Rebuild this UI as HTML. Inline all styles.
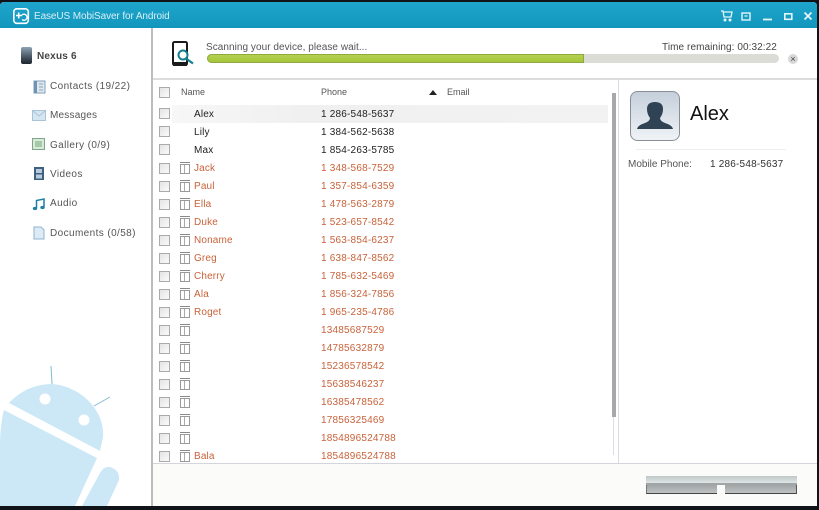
<!DOCTYPE html>
<html><head><meta charset="utf-8"><style>
html,body{margin:0;padding:0;width:819px;height:510px;overflow:hidden;background:#101418}
*{box-sizing:border-box}
body{font-family:"Liberation Sans",sans-serif;font-size:10px;color:#333;position:relative}
.a{position:absolute;white-space:nowrap}
.win{position:absolute;left:0;top:2px;width:817px;height:504px;background:#fff;border-radius:4px 4px 0 3px;overflow:hidden}
.cb{position:absolute;left:159px;width:11px;height:11px;border:1px solid #aaa;background:linear-gradient(135deg,#e4e4e4,#fafafa)}
.tr{position:absolute;left:180px;width:10px;height:10px;border:1px solid #999;background:linear-gradient(90deg,#fff 0 3px,#aaa 3px 4px,#fff 4px)}
.tr:before{content:"";position:absolute;left:-1px;top:-3px;width:10px;height:1px;background:#888}
.n{position:absolute;left:194px;font-size:10px;letter-spacing:.15px;white-space:nowrap;line-height:12px}
.p{position:absolute;left:321px;font-size:10px;letter-spacing:.2px;white-space:nowrap;line-height:12px}
.r{color:#c8623a}.k{color:#222}
.s{position:absolute;left:50px;color:#555;font-size:10px;letter-spacing:.4px;line-height:12px;white-space:nowrap}
</style></head><body>
<div class="win"></div>
<!-- title bar -->
<div class="a" style="left:0;top:2px;width:817px;height:26px;background:linear-gradient(#1fa5cc,#1296bd);border-radius:4px 4px 0 0"></div>
<svg class="a" style="left:12px;top:7px" width="18" height="18" viewBox="0 0 18 18"><rect x="1.800" y="1.800" width="14.500" height="14.500" rx="3" fill="none" stroke="#fff" stroke-width="1.600"/><path d="M4 8.500H10M6.700 5.500V11.500" stroke="#fff" stroke-width="1.600" fill="none"/><path d="M10 8a3 3 0 1 1 0 4.500" stroke="#fff" stroke-width="1.400" fill="none"/></svg>
<div class="a" style="left:34px;top:11px;color:#d8f0f8;font-size:10px;letter-spacing:-.1px;line-height:12px">EaseUS MobiSaver for Android</div>
<svg class="a" style="left:718px;top:9px" width="95" height="14" viewBox="0 0 95 14" fill="none" stroke="#e4f6fb"><path d="M3 2h2l1 6h7l1-5H5" stroke-width="1.300"/><circle cx="7" cy="11" r="1" fill="#e4f6fb"/><circle cx="12" cy="11" r="1" fill="#e4f6fb"/><rect x="24" y="4" width="8" height="7" stroke-width="1.400"/><path d="M26.500 7h3" stroke-width="1.200"/><path d="M45 10.500h9" stroke-width="1.800"/><rect x="66.800" y="4.800" width="7" height="5.500" stroke-width="1.600"/><path d="M86.500 3.500l7 7M93.500 3.500l-7 7" stroke-width="1.800"/></svg>
<!-- sidebar -->
<svg class="a" style="left:0;top:360px" width="152" height="146" viewBox="0 0 152 146">
<path d="M9 43C20 31 35 24 52 24C80 26 105 50 103 77L100 91Z" fill="#cce8f7"/>
<path d="M4 50L97 98L75 146H0V80Q1 60 4 50Z" fill="#cce8f7"/>
<path d="M82 146L100 113Q104 106 110 107Q120 110 119 120L107 146Z" fill="#cce8f7"/>
<circle cx="45" cy="39" r="5.500" fill="#fff"/><circle cx="84" cy="60" r="5.500" fill="#fff"/>
<path d="M51 6L52 24M94 46L110 37" stroke="#7fbccf" stroke-width="1" fill="none"/></svg>
<div class="a" style="left:21px;top:47px;width:11px;height:17px;border-radius:2px;background:linear-gradient(#8da2b5,#3a4652 70%,#1f272f)"></div>
<div class="a" style="left:37px;top:50px;font-weight:bold;color:#444;font-size:10px;letter-spacing:.2px;line-height:13px">Nexus 6</div>
<svg class="a" style="left:33px;top:80px" width="14" height="14"><rect x="1" y="1" width="11" height="12" fill="#dfe8f0" stroke="#7f9fb8"/><rect x="1" y="1" width="3" height="12" fill="#6f94b3"/><path d="M6 4h4M6 7h4M6 10h4" stroke="#8aa" /></svg>
<div class="s" style="top:81px">Contacts (19/22)</div>
<svg class="a" style="left:32px;top:110px" width="15" height="12"><rect x=".5" y=".5" width="13" height="10" fill="#d5e6f3" stroke="#a9c4d8"/><path d="M1 1l6 5 6-5" stroke="#a9c4d8" fill="none"/></svg>
<div class="s" style="top:110px;letter-spacing:.2px">Messages</div>
<svg class="a" style="left:32px;top:138px" width="14" height="13"><rect x=".5" y=".5" width="12" height="11" fill="#d9ead9" stroke="#7fa68a"/><rect x="3" y="3" width="7" height="6" fill="#a8c9a8"/></svg>
<div class="s" style="top:140px">Gallery (0/9)</div>
<svg class="a" style="left:34px;top:167px" width="11" height="14"><rect width="10" height="13" fill="#3e5f80"/><rect x="2" y="2" width="6" height="4" fill="#b9cbdb"/><rect x="2" y="7.500" width="6" height="4" fill="#b9cbdb"/></svg>
<div class="s" style="top:169px">Videos</div>
<svg class="a" style="left:32px;top:197px" width="14" height="14"><path d="M4.500 11V3.500L12 2V10" fill="none" stroke="#1f7fa6" stroke-width="1.500"/><ellipse cx="3" cy="11.500" rx="2.200" ry="1.600" fill="#1f7fa6"/><ellipse cx="10.500" cy="10.500" rx="2.200" ry="1.600" fill="#1f7fa6"/></svg>
<div class="s" style="top:198px">Audio</div>
<svg class="a" style="left:33px;top:226px" width="13" height="15"><path d="M1 1h7l3 3v9H1Z" fill="#dcebf6" stroke="#8fb3cf"/></svg>
<div class="s" style="top:228px">Documents (0/58)</div>
<!-- vertical divider -->
<div class="a" style="left:151px;top:28px;width:2px;height:478px;background:#bdbdbd"></div>
<!-- top scan area -->
<svg class="a" style="left:170px;top:39px" width="26" height="28" viewBox="0 0 26 28"><rect x="3" y="3" width="14" height="23" rx="1.500" fill="#fff" stroke="#1b1b1b" stroke-width="2"/><rect x="3" y="23" width="14" height="4" fill="#1b1b1b"/><circle cx="13" cy="16" r="4.500" fill="#fff" stroke="#13808f" stroke-width="2"/><path d="M16 19.500l7 5" stroke="#13808f" stroke-width="2.200"/></svg>
<div class="a" style="left:206px;top:42px;color:#555;font-size:10px;letter-spacing:.05px;line-height:12px">Scanning your device, please wait...</div>
<div class="a" style="left:662px;top:42px;color:#444;font-size:10px;letter-spacing:.08px;line-height:12px">Time remaining: 00:32:22</div>
<div class="a" style="left:207px;top:54px;width:572px;height:9px;background:#dcdcd6;border-radius:5px"></div>
<div class="a" style="left:207px;top:54px;width:377px;height:9px;background:linear-gradient(#b5d24f,#a5c53a);border:1px solid #8fa840;border-radius:5px 0 0 5px"></div>
<div class="a" style="left:788px;top:54px;width:10px;height:10px;border-radius:50%;background:#d8d8d8;color:#444;font-size:9px;line-height:10px;text-align:center">×</div>
<div class="a" style="left:153px;top:78px;width:664px;height:2px;background:#dcdcdc"></div>
<!-- header -->
<div class="cb" style="top:87px"></div>
<div class="a" style="left:181px;top:87px;color:#555;font-size:9px;letter-spacing:0;line-height:11px">Name</div>
<div class="a" style="left:321px;top:87px;color:#555;font-size:9px;letter-spacing:0;line-height:11px">Phone</div>
<div class="a" style="left:429px;top:90px;border-left:4px solid transparent;border-right:4px solid transparent;border-bottom:5px solid #222"></div>
<div class="a" style="left:447px;top:87px;color:#555;font-size:9px;letter-spacing:0;line-height:11px">Email</div>
<!-- selected row -->
<div class="a" style="left:172px;top:105px;width:436px;height:18px;background:linear-gradient(90deg,#f7f7f7,#f0f0f0 30%,#f2f2f2)"></div>
<!-- rows -->
<div class="cb" style="top:108px"></div><div class="n k" style="top:109px">Alex</div><div class="p k" style="top:109px">1 286-548-5637</div>
<div class="cb" style="top:126px"></div><div class="n k" style="top:127px">Lily</div><div class="p k" style="top:127px">1 384-562-5638</div>
<div class="cb" style="top:144px"></div><div class="n k" style="top:145px">Max</div><div class="p k" style="top:145px">1 854-263-5785</div>
<div class="cb" style="top:163px"></div><div class="tr" style="top:164px"></div><div class="n r" style="top:163px">Jack</div><div class="p r" style="top:163px">1 348-568-7529</div>
<div class="cb" style="top:181px"></div><div class="tr" style="top:182px"></div><div class="n r" style="top:181px">Paul</div><div class="p r" style="top:181px">1 357-854-6359</div>
<div class="cb" style="top:199px"></div><div class="tr" style="top:200px"></div><div class="n r" style="top:199px">Ella</div><div class="p r" style="top:199px">1 478-563-2879</div>
<div class="cb" style="top:217px"></div><div class="tr" style="top:218px"></div><div class="n r" style="top:217px">Duke</div><div class="p r" style="top:217px">1 523-657-8542</div>
<div class="cb" style="top:235px"></div><div class="tr" style="top:236px"></div><div class="n r" style="top:235px">Noname</div><div class="p r" style="top:235px">1 563-854-6237</div>
<div class="cb" style="top:253px"></div><div class="tr" style="top:254px"></div><div class="n r" style="top:253px">Greg</div><div class="p r" style="top:253px">1 638-847-8562</div>
<div class="cb" style="top:271px"></div><div class="tr" style="top:272px"></div><div class="n r" style="top:271px">Cherry</div><div class="p r" style="top:271px">1 785-632-5469</div>
<div class="cb" style="top:289px"></div><div class="tr" style="top:290px"></div><div class="n r" style="top:289px">Ala</div><div class="p r" style="top:289px">1 856-324-7856</div>
<div class="cb" style="top:307px"></div><div class="tr" style="top:308px"></div><div class="n r" style="top:307px">Roget</div><div class="p r" style="top:307px">1 965-235-4786</div>
<div class="cb" style="top:325px"></div><div class="tr" style="top:326px"></div><div class="p r" style="top:325px">13485687529</div>
<div class="cb" style="top:343px"></div><div class="tr" style="top:344px"></div><div class="p r" style="top:343px">14785632879</div>
<div class="cb" style="top:361px"></div><div class="tr" style="top:362px"></div><div class="p r" style="top:361px">15236578542</div>
<div class="cb" style="top:379px"></div><div class="tr" style="top:380px"></div><div class="p r" style="top:379px">15638546237</div>
<div class="cb" style="top:397px"></div><div class="tr" style="top:398px"></div><div class="p r" style="top:397px">16385478562</div>
<div class="cb" style="top:415px"></div><div class="tr" style="top:416px"></div><div class="p r" style="top:415px">17856325469</div>
<div class="cb" style="top:433px"></div><div class="tr" style="top:434px"></div><div class="p r" style="top:433px">1854896524788</div>
<div class="cb" style="top:451px"></div><div class="tr" style="top:452px"></div><div class="n r" style="top:451px">Bala</div><div class="p r" style="top:451px">1854896524788</div>
<!-- scrollbar -->
<div class="a" style="left:612px;top:93px;width:4px;height:324px;background:#a8a8a8"></div>
<div class="a" style="left:613px;top:417px;width:1px;height:38px;background:#ddd"></div>
<div class="a" style="left:618px;top:80px;width:1px;height:383px;background:#d8dce4"></div>
<!-- detail -->
<svg class="a" style="left:630px;top:91px" width="51" height="51" viewBox="0 0 51 51"><defs><linearGradient id="g" x1="0" y1="0" x2="0" y2="1"><stop offset="0" stop-color="#c4cfdb"/><stop offset="1" stop-color="#f0f3f6"/></linearGradient></defs><rect x=".5" y=".5" width="49" height="49" rx="7" fill="url(#g)" stroke="#8a8f96"/><path d="M7 38Q8 34 15 32Q20 30 20 27Q17 23 17 18Q17 11 25 11Q33 11 33 18Q33 23 30 27Q30 30 35 32Q42 34 43 38Z" fill="#2f4355"/></svg>
<div class="a" style="left:690px;top:103px;font-size:20px;color:#111;line-height:23px">Alex</div>
<div class="a" style="left:636px;top:149px;width:150px;height:1px;background:#eee"></div>
<div class="a" style="left:628px;top:159px;color:#555;font-size:10px;letter-spacing:0;line-height:12px">Mobile Phone:</div>
<div class="a" style="left:710px;top:159px;color:#333;font-size:10px;letter-spacing:.2px;line-height:12px">1 286-548-5637</div>
<!-- footer -->
<div class="a" style="left:153px;top:463px;width:664px;height:43px;background:#fbfbfa;border-top:1px solid #d4d4dc"></div>
<div class="a" style="left:646px;top:476px;width:151px;height:7px;background:linear-gradient(#bfc7c8,#dfe5e5)"></div>
<div class="a" style="left:646px;top:483px;width:151px;height:2px;background:#a0a5a6"></div>
<div class="a" style="left:646px;top:485px;width:71px;height:9px;background:linear-gradient(#a0a5a6,#bfc2c2);border-bottom:1px solid #444;border-left:1px solid #777"></div>
<div class="a" style="left:725px;top:485px;width:72px;height:9px;background:linear-gradient(#a0a5a6,#bfc2c2);border-bottom:1px solid #444;border-right:1px solid #555"></div>
</body></html>
